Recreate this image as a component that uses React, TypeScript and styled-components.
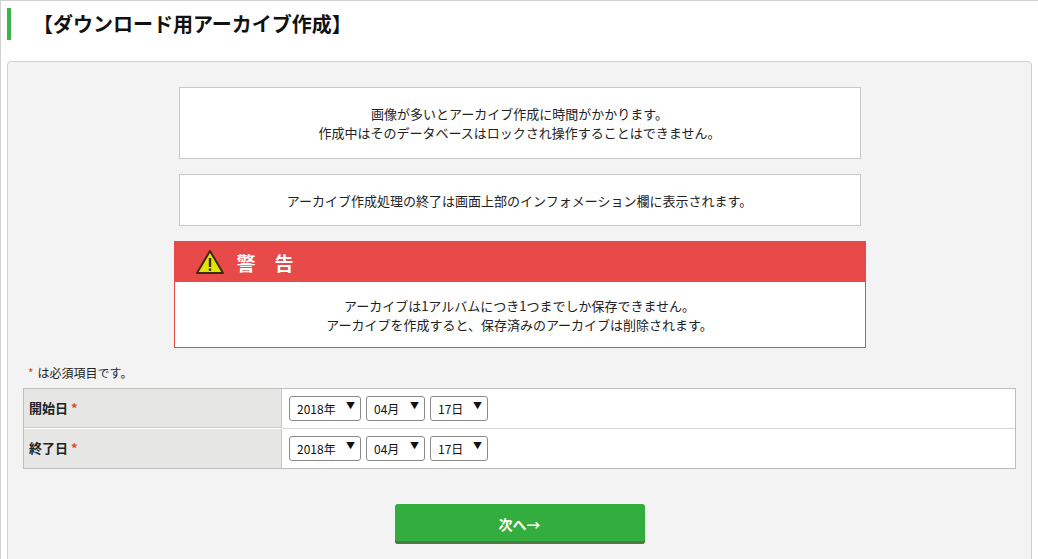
import React from "react";
import styled, { createGlobalStyle } from "styled-components";

const Global = createGlobalStyle`
  html, body { margin: 0; padding: 0; background: #fff; }
  body { font-family: "Noto Sans CJK JP", "Noto Sans", sans-serif; color: #222; font-size: 13px; }
`;

const Page = styled.div`
  width: 1038px; height: 559px; box-sizing: border-box;
  border-left: 1px solid #d0d0d0; border-top: 1px solid #d0d0d0;
  padding: 7px 6px 0 6px; overflow: hidden;
`;
const Title = styled.h1`
  margin: 0; height: 32px; border-left: 4px solid #3bb54a;
  padding-left: 22px; font-size: 20px; font-weight: bold; line-height: 32px; color: #111;
`;
const Panel = styled.div`
  margin-top: 21px; background: #f3f3f3; border: 1px solid #cfcfcf; border-radius: 4px;
  height: 520px; box-sizing: border-box; padding: 25px 15px 0 15px;
  display: flex; flex-direction: column; align-items: center;
`;
const InfoBox = styled.div<{ $h: number; $mt: number }>`
  width: 682px; height: ${p => p.$h}px; margin-top: ${p => p.$mt}px; box-sizing: border-box;
  background: #fff; border: 1px solid #c8c8c8; display: flex; flex-direction: column;
  justify-content: center; align-items: center; line-height: 19px; font-size: 13px;
`;
const Warn = styled.div`
  width: 692px; margin-top: 15px; border: 1px solid #e84a4a; background: #fff; box-sizing: border-box;
`;
const WarnHead = styled.div`
  height: 40px; background: #e84a4a; display: flex; align-items: center; padding-left: 20px;
  color: #fff; font-weight: bold; font-size: 19px; gap: 12px;
`;
const WarnBody = styled.div`
  height: 65px; display: flex; flex-direction: column; justify-content: center; align-items: center;
  line-height: 19px;
`;
const Note = styled.div`
  align-self: stretch; margin-top: 15px; padding-left: 5px; font-size: 12px; line-height: 20px;
`;
const Star = styled.span`color: #e0481c; margin-right: 4px;`;
const Table = styled.div`
  align-self: stretch; margin-top: 5px; border: 1px solid #bdbdbd; background: #fff;
  display: grid; grid-template-columns: 258px 1fr;
`;
const Label = styled.div<{ $last?: boolean }>`
  background: #e6e7e5; height: 39px; border-right: 1px solid #c8c8c8;
  ${p => !p.$last && "border-bottom: 1px solid #c8c8c8;"}
  font-weight: bold; font-size: 13px; padding: 9px 0 0 5px; box-sizing: border-box;
`;
const Cell = styled.div<{ $last?: boolean }>`
  height: 39px; ${p => !p.$last && "border-bottom: 1px solid #d6d6d6;"}
  display: flex; align-items: center; gap: 5px; padding-left: 7px;
`;
const SelWrap = styled.div<{ $w: number }>`
  position: relative; width: ${p => p.$w}px; height: 25px;
`;
const Sel = styled.select`
  appearance: none; width: 100%; height: 100%; border: 1px solid #8a8a8a; border-radius: 3px;
  background: #fff; font-family: "Noto Sans CJK JP", sans-serif; font-size: 12px; color: #111;
  padding: 0 0 0 7px; box-sizing: border-box;
`;
const Arrow = styled.span`
  position: absolute; right: 6px; top: 3px; font-size: 9px; pointer-events: none; color: #111;
`;
const Button = styled.button`
  margin-top: 35px; width: 250px; height: 40px; border: 0; border-radius: 3px;
  background: #33ad3d; box-shadow: inset 0 -3px 0 #4e7a47; color: #fff; font-weight: bold;
  font-size: 14px; font-family: "Noto Sans CJK JP", sans-serif;
`;

const Select = ({ w, v }: { w: number; v: string }) => (
  <SelWrap $w={w}>
    <Sel defaultValue={v}><option>{v}</option></Sel>
    <Arrow>▼</Arrow>
  </SelWrap>
);

const Dates = () => (
  <>
    <Select w={72} v="2018年" />
    <Select w={59} v="04月" />
    <Select w={58} v="17日" />
  </>
);

export default function App() {
  return (
    <Page>
      <Global />
      <Title>【ダウンロード用アーカイブ作成】</Title>
      <Panel>
        <InfoBox $h={72} $mt={0}>
          <div>画像が多いとアーカイブ作成に時間がかかります。</div>
          <div>作成中はそのデータベースはロックされ操作することはできません。</div>
        </InfoBox>
        <InfoBox $h={52} $mt={15}>
          <div>アーカイブ作成処理の終了は画面上部のインフォメーション欄に表示されます。</div>
        </InfoBox>
        <Warn>
          <WarnHead>
            <svg width="30" height="26" viewBox="0 0 30 26">
              <polygon points="15,2 28,24 2,24" fill="#e5e400" stroke="#3a2a1a" strokeWidth="2" strokeLinejoin="round" />
              <rect x="13.8" y="9" width="2.4" height="9" fill="#3a2a1a" />
              <rect x="13.8" y="19.5" width="2.4" height="2.4" fill="#3a2a1a" />
            </svg>
            <span>警　告</span>
          </WarnHead>
          <WarnBody>
            <div>アーカイブは1アルバムにつき1つまでしか保存できません。</div>
            <div>アーカイブを作成すると、保存済みのアーカイブは削除されます。</div>
          </WarnBody>
        </Warn>
        <Note><Star>*</Star>は必須項目です。</Note>
        <Table>
          <Label>開始日 <Star>*</Star></Label>
          <Cell><Dates /></Cell>
          <Label $last>終了日 <Star>*</Star></Label>
          <Cell $last><Dates /></Cell>
        </Table>
        <Button>次へ→</Button>
      </Panel>
    </Page>
  );
}
